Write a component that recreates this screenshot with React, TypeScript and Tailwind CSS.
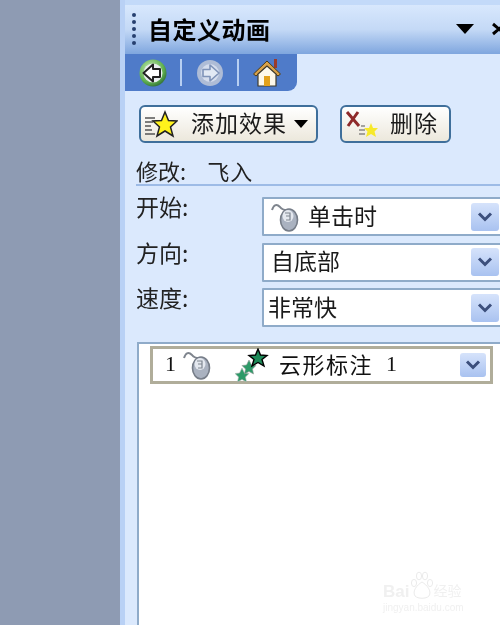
const CJK = { fontFamily: '"Noto Sans CJK SC", sans-serif' };
const SERIF = { fontFamily: '"Liberation Serif", serif' };

function Chevron({ small }: { small?: boolean }) {
  return (
    <div className={`flex items-center justify-center rounded-[3px] bg-gradient-to-b from-[#d6e3fb] to-[#a9c2f0] ${small ? "w-[26px] h-[24px]" : "w-[28px] h-[28px]"}`}>
      <svg width="16" height="12" viewBox="0 0 16 12" fill="none">
        <path d="M2 2.5 L8 8.5 L14 2.5" stroke="#3c4f7c" strokeWidth="3" />
      </svg>
    </div>
  );
}

function Mouse() {
  return (
    <svg width="28" height="30" viewBox="0 0 28 30" className="shrink-0">
      <path d="M1 8 C3 2 6 2 9 5 C11 8 13 8 16 8" fill="none" stroke="#7f858e" strokeWidth="2" />
      <ellipse cx="18" cy="18" rx="8.5" ry="11" fill="#aab2c0" stroke="#767d88" strokeWidth="1.6" />
      <ellipse cx="17" cy="14" rx="5.5" ry="6" fill="#e4e8ef" />
      <path d="M14 11 H19 V14 H15 M19 14 V18 H15" fill="none" stroke="#7e8590" strokeWidth="1.2" />
    </svg>
  );
}

function Field({ children }: { children: React.ReactNode }) {
  return (
    <div className="flex-1 h-[39px] -mr-[2px] flex items-center justify-between bg-white border-2 border-[#8fabc9] rounded-[1px] pr-[1px]">
      <div className="flex items-center text-[23px] text-[#1a1a1a] leading-none whitespace-nowrap">{children}</div>
      <Chevron />
    </div>
  );
}

function Row({ label, children }: { label: string; children: React.ReactNode }) {
  return (
    <div className="flex h-[45.5px]">
      <div className="w-[137px] pl-[11px] -mt-[2px] text-[23px] text-[#222] leading-none whitespace-nowrap">{label}</div>
      <Field>{children}</Field>
    </div>
  );
}

export default function App() {
  return (
    <div className="relative flex w-[500px] h-[625px] overflow-hidden bg-[#dbe9fd] blur-[0.4px]" style={CJK}>
      <div className="w-[120px] shrink-0 bg-[#8e9bb3]" />
      <div className="w-[5px] shrink-0 bg-[#b9d1f5]" />
      <div className="flex-1 flex flex-col min-w-0">
        <div className="h-[5px] shrink-0 bg-[#c3daf9]" />
        <div className="h-[49px] shrink-0 flex items-center pb-[2px] bg-gradient-to-b from-[#d8e8fd] via-[#c4d9f6] to-[#7fa6de] overflow-hidden">
          <svg width="8" height="32" viewBox="0 0 8 32" className="ml-[5px] shrink-0">
            {[0, 7, 14, 21, 28].map((y) => (
              <circle key={y} cx="4" cy={y + 2} r="2" fill="#27406f" />
            ))}
          </svg>
          <span className="ml-[10px] text-[24px] tracking-[0.5px] font-bold text-black leading-none whitespace-nowrap shrink-0">自定义动画</span>
          <svg width="18" height="10" viewBox="0 0 18 10" className="ml-[185px] shrink-0">
            <path d="M0 0 H18 L9 10 Z" fill="#000" />
          </svg>
          <svg width="14" height="14" viewBox="0 0 14 14" className="ml-[18px] shrink-0">
            <path d="M1 2 L13 12 M13 2 L1 12" stroke="#000" strokeWidth="3" />
          </svg>
        </div>
        <div className="w-[172px] h-[37px] shrink-0 flex items-center bg-[#4f7bc9] rounded-br-[9px]">
          <svg width="28" height="28" viewBox="0 0 28 28" className="ml-[14px] shrink-0">
            <defs>
              <radialGradient id="g" cx="40%" cy="35%" r="70%">
                <stop offset="0%" stopColor="#c9eeb8" />
                <stop offset="70%" stopColor="#5fb04f" />
                <stop offset="100%" stopColor="#2d6b35" />
              </radialGradient>
            </defs>
            <circle cx="14" cy="14" r="13.5" fill="url(#g)" />
            <circle cx="14" cy="14" r="9.5" fill="#e9eef0" />
            <path d="M4.5 14 L14 5.5 V10 H21 V18 H14 V22.5 Z" fill="#fff" stroke="#222" strokeWidth="2" strokeLinejoin="round" />
          </svg>
          <div className="ml-[13px] w-[2px] h-[27px] bg-[#b7cff2]" />
          <svg width="26" height="26" viewBox="0 0 26 26" className="ml-[15px] shrink-0">
            <circle cx="13" cy="13" r="13" fill="#aebcd6" />
            <circle cx="13" cy="13" r="9" fill="#d5dded" />
            <path d="M22 13 L13 5 V9.5 H6 V16.5 H13 V21 Z" fill="#e2e9f4" stroke="#7f93b8" strokeWidth="1.6" strokeLinejoin="round" />
          </svg>
          <div className="ml-[14px] w-[2px] h-[27px] bg-[#b7cff2]" />
          <svg width="28" height="30" viewBox="0 0 28 30" className="ml-[14px] shrink-0">
            <path d="M21 1 h3 v9 h-3 Z" fill="#9c3a2a" />
            <path d="M14 3 L0.5 16 L3 18 L14 8 L25 18 L27.5 16 Z" fill="#d9a24a" stroke="#4f3c14" strokeWidth="1" />
            <path d="M5 16 L14 8 L23 16 V28 H5 Z" fill="#fdf8ea" stroke="#3f3a2c" strokeWidth="1.2" />
            <rect x="11" y="18" width="6" height="10" fill="#e3a21c" />
          </svg>
        </div>
        <div className="flex gap-[22px] mt-[14px] ml-[14px] shrink-0">
          <div className="w-[179px] h-[38px] flex items-center rounded-[6px] border-2 border-[#3f6f9b] bg-gradient-to-b from-white to-[#ece8dc]">
            <svg width="34" height="30" viewBox="0 0 34 30" className="ml-[3px] shrink-0">
              <path d="M1 9 H11 M1 13 H9 M1 17 H7 M1 21 H8 M1 25 H11" stroke="#555" strokeWidth="1.4" />
              <path d="M21 3 L24.5 11.5 L33 12 L26.5 18 L29 27 L21 22 L13 27 L15.5 18 L9 12 L17.5 11.5 Z" fill="#fff21c" stroke="#222" strokeWidth="1.5" />
            </svg>
            <span className="ml-[13px] pb-[3px] text-[23px] tracking-[1px] text-[#1a1a1a] leading-none whitespace-nowrap">添加效果</span>
            <svg width="14" height="8" viewBox="0 0 14 8" className="ml-[7px] shrink-0"><path d="M0 0 H14 L7 8 Z" fill="#000" /></svg>
          </div>
          <div className="w-[111px] h-[38px] flex items-center rounded-[6px] border-2 border-[#3f6f9b] bg-gradient-to-b from-white to-[#ece8dc]">
            <svg width="34" height="30" viewBox="0 0 34 30" className="ml-[3px] shrink-0">
              <path d="M2 3 L14 17 M13 3 L3 17" stroke="#8e2a2a" strokeWidth="3" />
              <path d="M14 21 H20 M14 25 H20 M16 17 H20" stroke="#555" strokeWidth="1.2" />
              <path d="M26 14 L28 19 L33 19 L29.5 22.5 L31 28 L26 25 L21 28 L22.5 22.5 L19 19 L24 19 Z" fill="#f7e92a" />
            </svg>
            <span className="ml-[11px] pb-[3px] text-[23px] tracking-[1px] text-[#1a1a1a] leading-none whitespace-nowrap">删除</span>
          </div>
        </div>
        <div className="mt-[10px] ml-[11px] h-[33px] shrink-0 border-b-2 border-[#9dbbe6] flex items-end pb-[3px] text-[22px] text-[#222] leading-none whitespace-nowrap">
          <span>修改:</span>
          <span className="ml-[21px] tracking-[1px]">飞入</span>
        </div>
        <div className="mt-[11px] flex flex-col shrink-0">
          <Row label="开始:">
            <span className="ml-[7px]"><Mouse /></span>
            <span className="ml-[9px] pb-[3px]">单击时</span>
          </Row>
          <Row label="方向:"><span className="ml-[7px] pb-[3px]">自底部</span></Row>
          <Row label="速度:"><span className="ml-[4px] pb-[3px]">非常快</span></Row>
        </div>
        <div className="flex-1 ml-[12px] mt-[8px] -mr-[2px] bg-white border-2 border-[#8fabc9] border-b-0 pt-[2px] pl-[11px] pr-[7px]">
          <div className="h-[38px] flex items-center justify-between border-[3px] border-[#b0ad9a] bg-white pr-[4px]">
            <div className="flex items-center text-[22px] text-[#111] leading-none whitespace-nowrap">
              <span className="ml-[12px] w-[18px] pb-[2px]" style={SERIF}>1</span>
              <Mouse />
              <svg width="34" height="34" viewBox="0 0 34 34" className="ml-[24px] shrink-0">
                <path d="M7 20 L9.5 25 L14 25.5 L10.5 29 L11.5 34 L7 31.5 L2.5 34 L3.5 29 L0 25.5 L4.5 25 Z" fill="#2d9a68" stroke="#bbb" strokeWidth="0.6" />
                <path d="M14 12 L16.5 17 L21 17.5 L17.5 21 L18.5 26 L14 23.5 L9.5 26 L10.5 21 L7 17.5 L11.5 17 Z" fill="#2d9a68" stroke="#999" strokeWidth="0.6" />
                <path d="M23 1 L25.5 7 L32 7.5 L27 11.5 L29 18 L23 14.5 L17 18 L19 11.5 L14 7.5 L20.5 7 Z" fill="#1d8a58" stroke="#000" strokeWidth="1.4" />
              </svg>
              <span className="ml-[10px] pb-[3px] tracking-[1.5px]">云形标注</span>
              <span className="ml-[13px] pb-[2px]" style={SERIF}>1</span>
            </div>
            <Chevron small />
          </div>
        </div>
      </div>
      <div className="absolute left-[383px] top-[570px] w-[90px] h-[44px] text-[#f0f0f0] pointer-events-none">
        <div className="flex items-end h-[30px]">
          <span className="text-[17px] leading-none font-bold" style={{ fontFamily: '"Liberation Sans", sans-serif' }}>Bai</span>
          <svg width="24" height="30" viewBox="0 0 24 30" className="shrink-0">
            <ellipse cx="5" cy="13" rx="2.6" ry="3.6" fill="none" stroke="#ebebeb" />
            <ellipse cx="10" cy="6" rx="2.6" ry="3.8" fill="none" stroke="#ebebeb" />
            <ellipse cx="16" cy="6" rx="2.6" ry="3.8" fill="none" stroke="#ebebeb" />
            <ellipse cx="21" cy="13" rx="2.6" ry="3.6" fill="none" stroke="#ebebeb" />
            <path d="M13 12 C8 15 3 21 6 26 C9 29 17 29 20 26 C23 21 18 15 13 12 Z" fill="none" stroke="#ebebeb" />
          </svg>
          <span className="text-[14px] leading-[14px] mb-[3px]">经验</span>
        </div>
        <div className="mt-[3px] text-[10px] leading-[10px] whitespace-nowrap" style={{ fontFamily: '"Liberation Sans", sans-serif' }}>jingyan.baidu.com</div>
      </div>
    </div>
  );
}
